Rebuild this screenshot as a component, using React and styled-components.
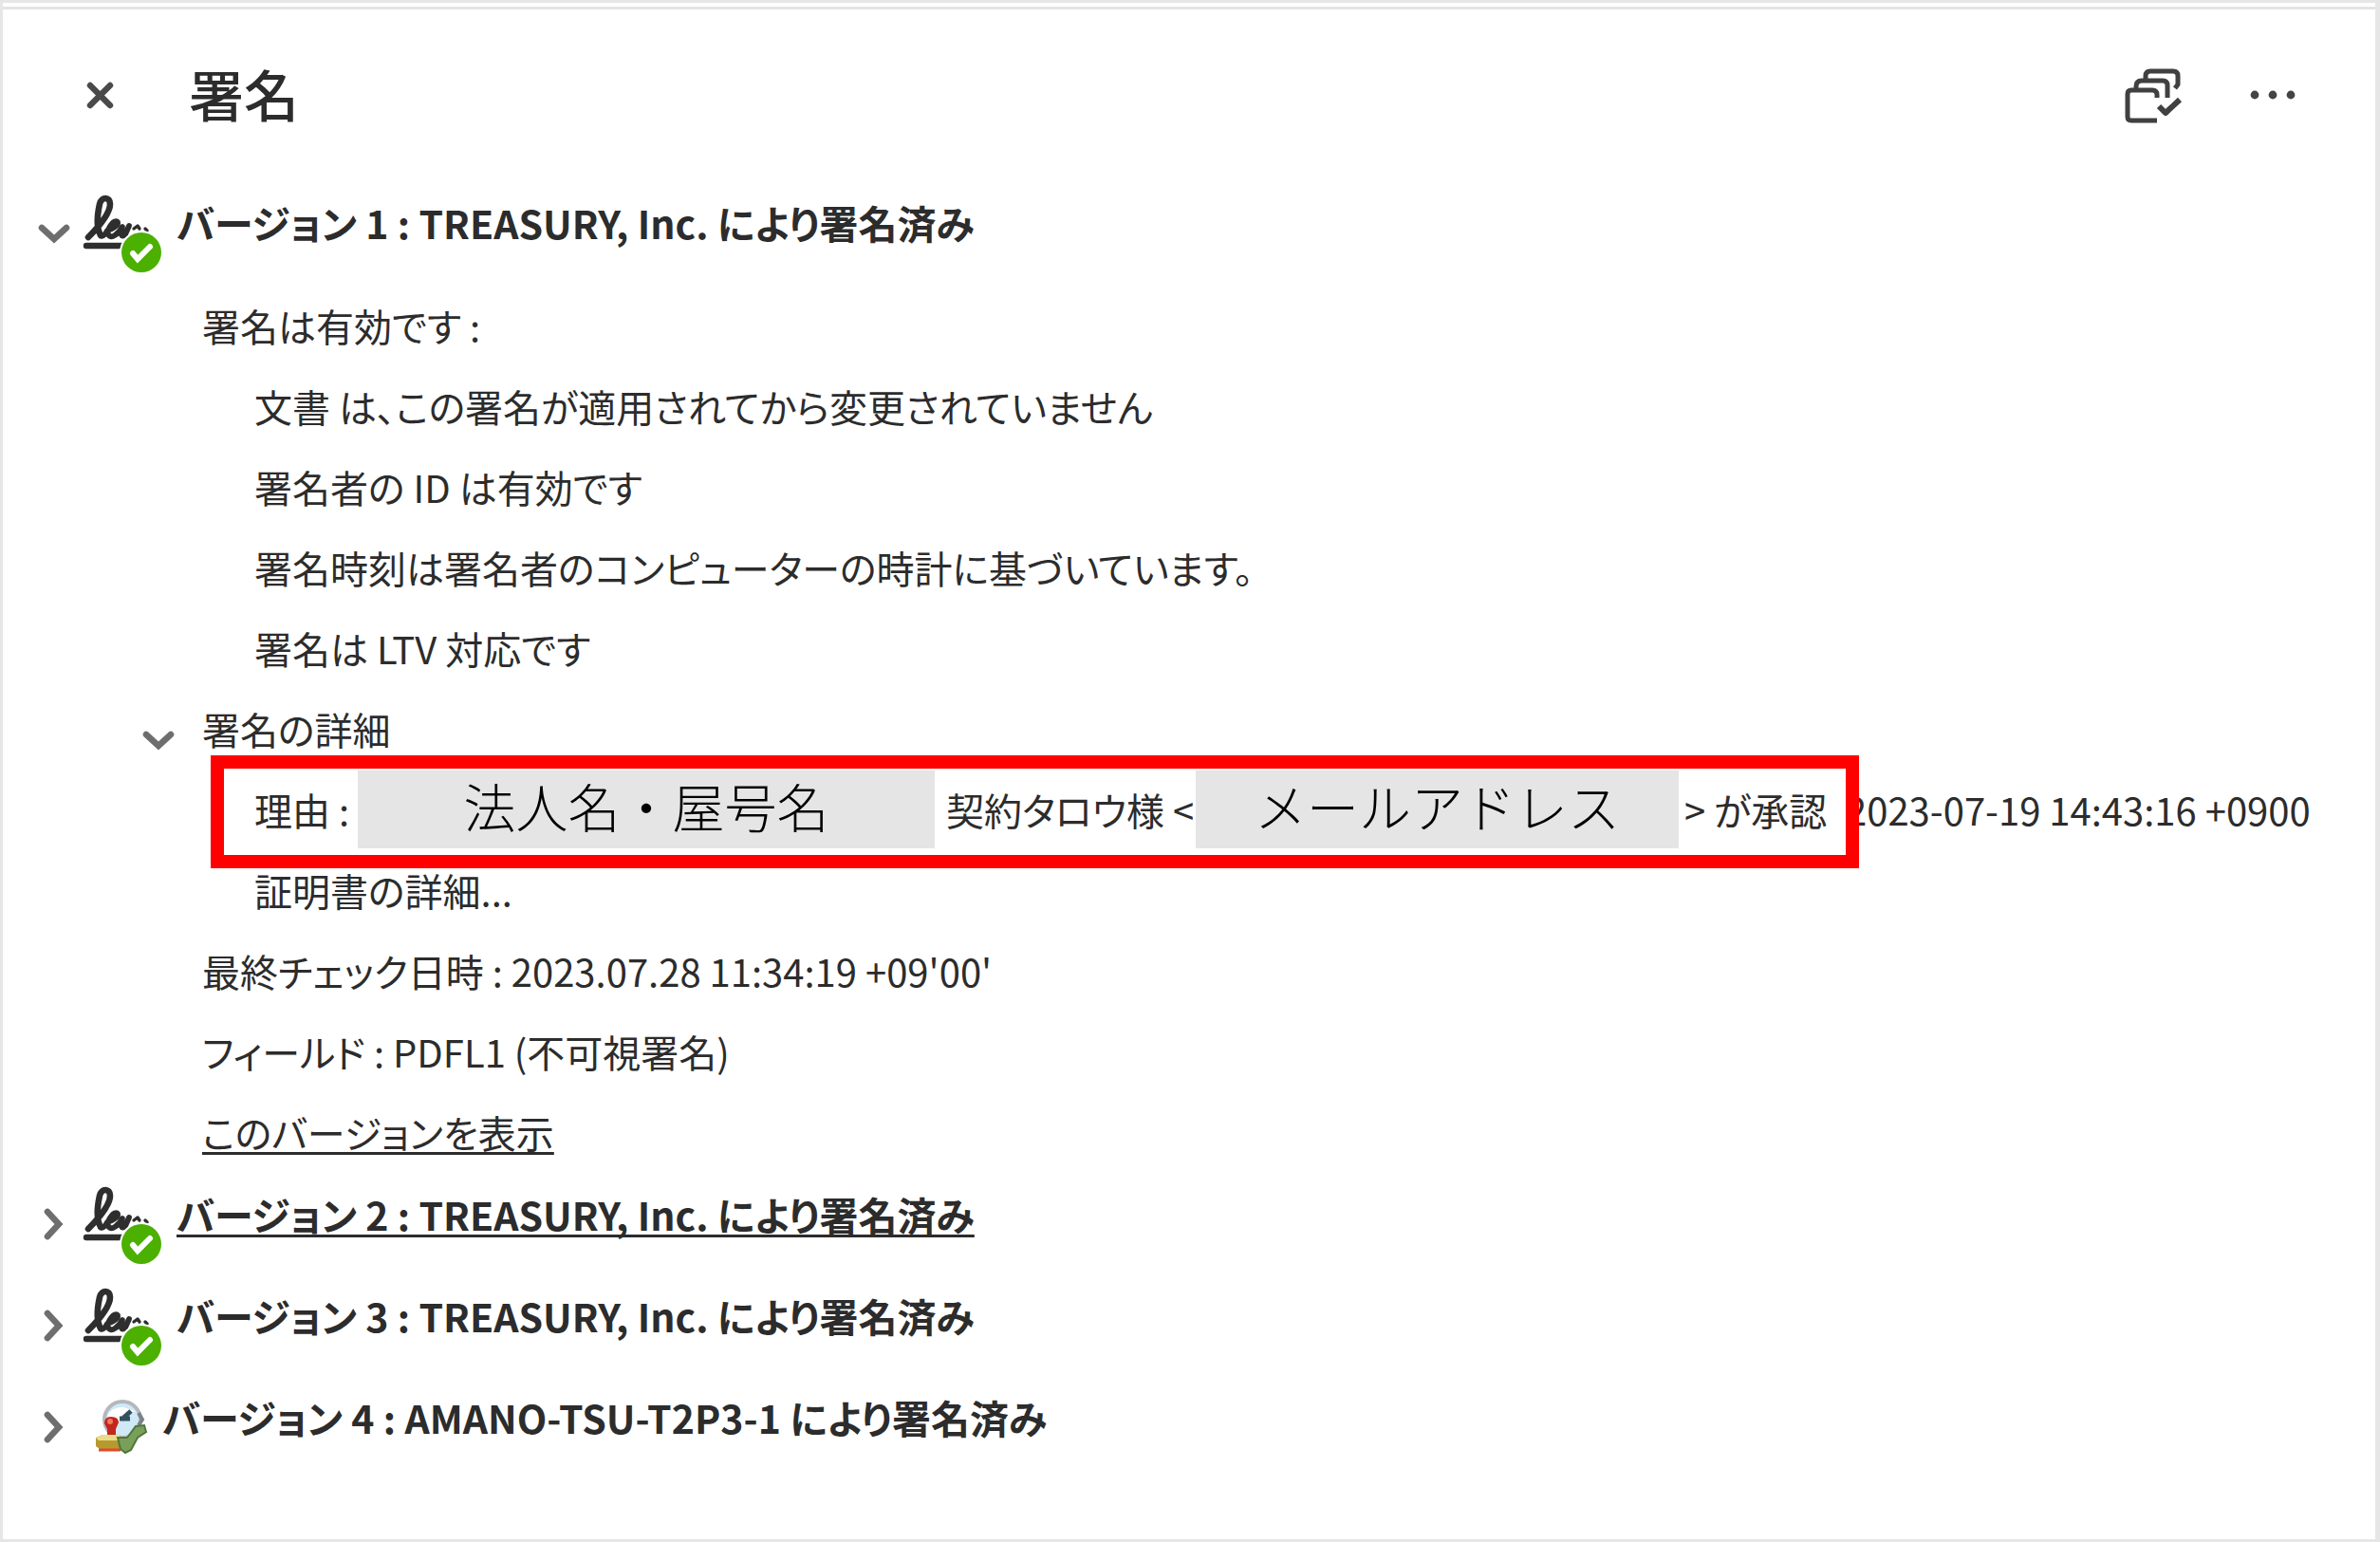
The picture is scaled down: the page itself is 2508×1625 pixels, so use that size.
import React, { useState } from 'react'
import styled, { createGlobalStyle } from 'styled-components'

const GlobalStyle = createGlobalStyle`
    * {
        box-sizing: border-box;
    }
    body {
        margin: 0;
        background: #ffffff;
    }
`

const StyledPanel = styled.main`
    min-height: 100vh;
    padding: 4px 0 0;
    border: 3px solid #e6e6e6;
    border-right-width: 5px;
    color: #2c2c2c;
    font-family: "Noto Sans CJK JP", "Noto Sans", sans-serif;
    font-size: 40px;
    font-feature-settings: "palt";
    white-space: nowrap;
`

const StyledHeader = styled.header`
    display: flex;
    align-items: center;
    height: 184px;
    padding: 0 84px 0 86px;
    border-top: 3px solid #e4e4e4;
`

const StyledTitle = styled.h1`
    flex: 1;
    margin: 0 0 6px 78px;
    font-size: 58px;
    font-weight: 500;
    line-height: 80px;
`

const StyledIconButton = styled.button`
    display: flex;
    align-items: center;
    justify-content: center;
    padding: 0;
    border: 0;
    background: none;
    cursor: pointer;
`

const StyledTools = styled.div`
    display: flex;
    align-items: center;
    gap: 70px;
`

// one signature: heading row and its details
const StyledVersion = styled.section`
    padding: 0 0 22px 35px;
`

const StyledVersionRow = styled.div`
    display: flex;
    align-items: center;
    height: 85px;
`

const StyledToggle = styled(StyledIconButton)`
    width: 38px;
    height: 38px;
    margin-top: 22px;
    color: #6e6e6e;
`

const StyledMark = styled.span`
    display: flex;
    margin: 22px 0 0 ${(props) => props.$left};
`

const StyledVersionTitle = styled.h2`
    margin: 0 0 0 15px;
    font-size: 41px;
    font-weight: 700;
    line-height: 60px;
`

const StyledDetails = styled.div`
    padding: 24px 0 0 175px;
    margin-bottom: -21px;
`

const StyledLine = styled.div`
    display: flex;
    align-items: center;
    height: 85px;
    padding-left: ${(props) => (props.$sub ? '55px' : '0')};
`

const StyledDetailToggle = styled(StyledToggle)`
    margin-left: -65px;
    margin-right: 27px;
`

const StyledLink = styled.a`
    color: inherit;
    text-decoration: underline;
    text-decoration-thickness: 3px;
    text-underline-offset: 4px;
    text-decoration-skip-ink: none;
`

const StyledReason = styled.span`
    position: relative;
    display: flex;
    flex-shrink: 0;
    align-items: center;
    width: 1677px;
`

// red frame laid over the reason
const StyledFrame = styled.span`
    position: absolute;
    inset: -16px -14px -21px -46px;
    border: 14px solid #ff0000;
    pointer-events: none;
`

const StyledReasonText = styled.span`
    flex-shrink: 0;
    width: ${(props) => props.$width};
    padding-left: ${(props) => props.$gap || '0'};
`

const StyledMask = styled.span`
    flex-shrink: 0;
    width: ${(props) => props.$width};
    height: 82px;
    background: #e5e5e5;
    color: #000000;
    font-size: 55px;
    font-weight: 300;
    font-feature-settings: normal;
    line-height: 72px;
    text-align: center;
`

const CloseIcon = () => (
    <svg width="32" height="32" viewBox="0 0 32 32" fill="none" stroke="#4a4a4a" strokeWidth="6.4" strokeLinecap="round">
        <path d="M6 5L27 26M27 5L6 26" />
    </svg>
)

const StackIcon = () => (
    <svg width="62" height="60" viewBox="0 0 62 60" fill="none" stroke="#404040" strokeWidth="5" strokeLinecap="butt" strokeLinejoin="round">
        <path d="M22 13V9Q22 4 27 4H51Q56 4 56 9V18L53 22" />
        <path d="M12 24V20Q12 14 18 14H40Q45 14 45 19V32" />
        <path d="M34 32V29Q34 24 29 24H7Q3 24 3 28V52Q3 56 7 56H34" />
        <path d="M36 41L43 48L58 34" strokeWidth="6" />
    </svg>
)

const MoreIcon = () => (
    <svg width="48" height="12" viewBox="0 0 48 12" fill="#444444">
        <circle cx="5" cy="5" r="4.4" />
        <circle cx="24" cy="5" r="4.4" />
        <circle cx="43" cy="5" r="4.4" />
    </svg>
)

const Chevron = ({ open }) => (
    <svg width="38" height="38" viewBox="0 0 38 38" fill="none" stroke="currentColor" strokeWidth="6.6" strokeLinecap="round">
        <path d={open ? 'M6 14L19 26L32 14' : 'M12 6L24 19L12 32'} />
    </svg>
)

const SignedIcon = () => (
    <svg width="84" height="84" viewBox="0 0 84 84" fill="none">
        <g stroke="#2e2e2e" strokeLinecap="round" strokeLinejoin="round">
            <path d="M6 47C15 38 29 23 29 12C29 4 20 4 18 12C16 21 14 36 19 45" strokeWidth="6.6" />
            <path d="M19 45C21 47 24 44 26 40C31 38 38 35 37 31C34 27 25 38 27 44C30 50 38 43 42 36C39 44 41 48 45 44L49 35" strokeWidth="5.8" />
            <path d="M54 38L58 35L60 38M66 38L68 40" strokeWidth="3.4" />
            <path d="M4 56H44" strokeWidth="6.4" />
        </g>
        <circle cx="62" cy="63" r="23" fill="#ffffff" />
        <circle cx="62" cy="63" r="21" fill="#4bb000" />
        <path d="M53 64L58 70L71 57" stroke="#ffffff" strokeWidth="6" strokeLinecap="round" />
    </svg>
)

// timestamp: a clock with a rubber stamp and a check
const StampIcon = () => (
    <svg width="56" height="58" viewBox="0 0 56 58" fill="none">
        <circle cx="29" cy="21" r="19" fill="#cfeaf6" stroke="#b4b8bd" strokeWidth="4" />
        <path d="M13 17Q17 8 30 8L42 12L24 24Z" fill="#ffffff" />
        <path d="M28 21L38 12M26 20H37" stroke="#35505f" strokeWidth="5" />
        <path d="M46 14L50 21L46 27" stroke="#7c8288" strokeWidth="4" />
        <path d="M10 25Q10 18 17 18Q25 18 25 24L22 31V40H13V31Z" fill="#c3261a" />
        <circle cx="16" cy="23" r="3" fill="#ef7b62" />
        <path d="M1 40L8 37H27V52H5L1 49Z" fill="#b79a2e" />
        <path d="M1 40L8 37H27L25 43H4Z" fill="#eadb8c" />
        <path d="M4 53H27" stroke="#e0492c" strokeWidth="3" />
        <path d="M24 40L34 40L43 28L52 27L54 34L45 40L38 53L32 56L27 52Z" fill="#79a05a" stroke="#52763b" strokeWidth="2" />
    </svg>
)

const VersionHead = ({ open, onToggle, stamp, children }) => (
    <StyledVersionRow>
        <StyledToggle type="button" aria-label="展開" aria-expanded={open} onClick={onToggle}>
            <Chevron open={open} />
        </StyledToggle>
        <StyledMark $left={stamp ? '24px' : '11px'}>
            {stamp ? <StampIcon /> : <SignedIcon />}
        </StyledMark>
        <StyledVersionTitle>{children}</StyledVersionTitle>
    </StyledVersionRow>
)

const checks = [
    '文書 は、この署名が適用されてから変更されていません',
    '署名者の ID は有効です',
    '署名時刻は署名者のコンピューターの時計に基づいています。',
    '署名は LTV 対応です',
]

const versions = [
    { id: 2, title: 'バージョン 2 : TREASURY, Inc. により署名済み', link: true },
    { id: 3, title: 'バージョン 3 : TREASURY, Inc. により署名済み' },
    { id: 4, title: 'バージョン 4 : AMANO-TSU-T2P3-1 により署名済み', stamp: true },
]

const App = () => {
    const [firstOpen, setFirstOpen] = useState(true)
    const [detailOpen, setDetailOpen] = useState(true)
    const [opened, setOpened] = useState({})

    const handleToggle = (id) => {
        setOpened({ ...opened, [id]: !opened[id] })
    }

    return (
        <StyledPanel>
            <GlobalStyle />
            <StyledHeader>
                <StyledIconButton type="button" aria-label="閉じる">
                    <CloseIcon />
                </StyledIconButton>
                <StyledTitle>署名</StyledTitle>
                <StyledTools>
                    <StyledIconButton type="button" aria-label="すべてを検証">
                        <StackIcon />
                    </StyledIconButton>
                    <StyledIconButton type="button" aria-label="オプション">
                        <MoreIcon />
                    </StyledIconButton>
                </StyledTools>
            </StyledHeader>

            <StyledVersion>
                <VersionHead open={firstOpen} onToggle={() => setFirstOpen(!firstOpen)}>
                    バージョン 1 : TREASURY, Inc. により署名済み
                </VersionHead>
                {firstOpen && (
                    <StyledDetails>
                        <StyledLine>署名は有効です :</StyledLine>
                        {checks.map((text) => (
                            <StyledLine key={text} $sub>{text}</StyledLine>
                        ))}
                        <StyledLine>
                            <StyledDetailToggle
                                type="button"
                                aria-label="署名の詳細"
                                aria-expanded={detailOpen}
                                onClick={() => setDetailOpen(!detailOpen)}
                            >
                                <Chevron open={detailOpen} />
                            </StyledDetailToggle>
                            署名の詳細
                        </StyledLine>
                        {detailOpen && (
                            <>
                                <StyledLine $sub>
                                    <StyledReason>
                                        <StyledReasonText $width="109px">理由 :</StyledReasonText>
                                        <StyledMask $width="608px">法人名・屋号名</StyledMask>
                                        <StyledReasonText $width="275px" $gap="12px">契約タロウ様 &lt;</StyledReasonText>
                                        <StyledMask $width="509px">メールアドレス</StyledMask>
                                        <StyledReasonText $width="176px" $gap="6px">&gt; が承認</StyledReasonText>
                                        <StyledFrame />
                                    </StyledReason>
                                    2023-07-19 14:43:16 +0900
                                </StyledLine>
                                <StyledLine $sub>証明書の詳細...</StyledLine>
                            </>
                        )}
                        <StyledLine>最終チェック日時 : 2023.07.28 11:34:19 +09'00'</StyledLine>
                        <StyledLine>フィールド : PDFL1 (不可視署名)</StyledLine>
                        <StyledLine>
                            <StyledLink href="#version-1">このバージョンを表示</StyledLink>
                        </StyledLine>
                    </StyledDetails>
                )}
            </StyledVersion>

            {versions.map((item) => (
                <StyledVersion key={item.id}>
                    <VersionHead
                        open={!!opened[item.id]}
                        onToggle={() => handleToggle(item.id)}
                        stamp={item.stamp}
                    >
                        {item.link ? <StyledLink href={`#version-${item.id}`}>{item.title}</StyledLink> : item.title}
                    </VersionHead>
                </StyledVersion>
            ))}
        </StyledPanel>
    )
}

export default App
